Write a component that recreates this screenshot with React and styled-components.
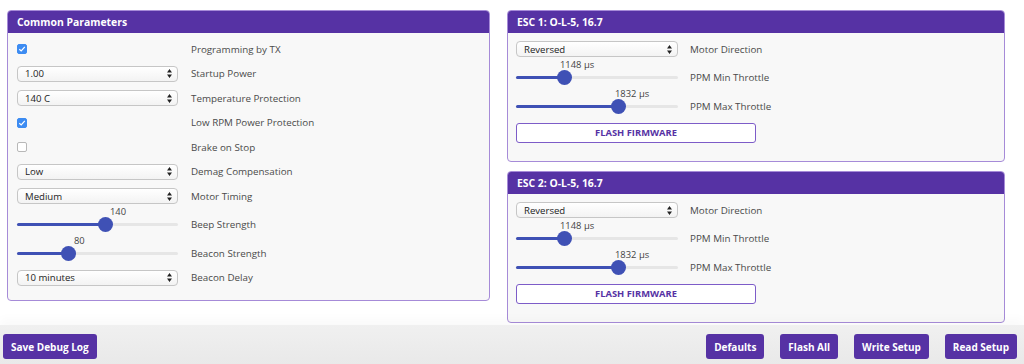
import React from 'react';
import styled, { createGlobalStyle } from 'styled-components';

const Global = createGlobalStyle`
  html, body {
    margin: 0;
    padding: 0;
    background: #ffffff;
    font-family: "Open Sans", "Liberation Sans", sans-serif;
  }
  * { box-sizing: border-box; }
`;

const purple = '#5632a4';

const Page = styled.div`
  width: 1024px;
  height: 364px;
  display: flex;
  flex-direction: column;
  overflow: hidden;
`;

const Content = styled.div`
  flex: 1;
  display: flex;
  align-items: flex-start;
  gap: 17px;
  padding: 10px 19px 0 7px;
`;

const Column = styled.div`
  width: 498px;
  display: flex;
  flex-direction: column;
  gap: 9px;
`;

const Panel = styled.section`
  width: ${p => p.$w}px;
  height: ${p => p.$h}px;
  border: 1px solid #a68bd8;
  border-radius: 4px;
  background: #f8f8f8;
  overflow: hidden;
`;

const Header = styled.h3`
  margin: 0;
  height: 22px;
  line-height: 22px;
  padding-left: 9px;
  background: ${purple};
  color: #fff;
  font-size: 10.4px;
  font-weight: 700;
`;

const Body = styled.div`
  padding: 4px ${p => p.$pad}px 0;
`;

const Row = styled.div`
  display: flex;
  align-items: center;
  height: 24.5px;
  margin-top: ${p => (p.$slider ? 4 : 0)}px;
`;

const Control = styled.div`
  width: ${p => p.$w}px;
  flex: none;
  position: relative;
  display: flex;
  align-items: center;
`;

const Label = styled.span`
  margin-left: ${p => p.$gap}px;
  font-size: 9.8px;
  color: #4a4a4a;
  white-space: nowrap;
`;

const Check = styled.span`
  width: 10px;
  height: 10px;
  border-radius: 2px;
  display: inline-flex;
  align-items: center;
  justify-content: center;
  background: ${p => (p.$on ? '#3d8cf2' : '#fff')};
  border: 1px solid ${p => (p.$on ? '#3d8cf2' : '#b8b8b8')};
`;

const SelectBox = styled.div`
  width: 100%;
  height: 16px;
  border: 1px solid #c6c6c6;
  border-radius: 4px;
  background: linear-gradient(#ffffff, #f3f3f3);
  display: flex;
  align-items: center;
  justify-content: space-between;
  padding: 0 5px 0 7px;
  font-size: 9.6px;
  color: #222;
`;

const Track = styled.div`
  position: relative;
  width: 100%;
  height: 3px;
  border-radius: 2px;
  background: #e6e6e6;
`;

const Fill = styled.div`
  position: absolute;
  left: 0;
  top: 0;
  height: 3px;
  border-radius: 2px;
  background: #3f51b5;
`;

const Thumb = styled.div`
  position: absolute;
  top: -6px;
  width: 15px;
  height: 15px;
  margin-left: -7.5px;
  border-radius: 50%;
  background: #3f51b5;
`;

const Value = styled.span`
  position: absolute;
  top: -17px;
  font-size: 9.4px;
  line-height: 12px;
  color: #444;
  white-space: nowrap;
`;

const FlashButton = styled.button`
  margin-top: 4px;
  width: 240px;
  height: 20px;
  border: 1px solid #7d5cc8;
  border-radius: 3px;
  background: #fff;
  color: ${purple};
  font-family: inherit;
  font-size: 9.4px;
  font-weight: 700;
  padding: 0;
`;

const Toolbar = styled.div`
  height: 39px;
  flex: none;
  display: flex;
  align-items: flex-start;
  padding: 9px 7px 0 3px;
  background: linear-gradient(#f0f0f0, #e9e9e9);
  box-shadow: 0 -6px 10px rgba(0, 0, 0, 0.025);
`;

const Spacer = styled.div`
  flex: 1;
`;

const ToolButton = styled.button`
  height: 25px;
  margin-left: ${p => p.$ml || 0}px;
  padding: 0 8px;
  border: none;
  border-radius: 3px;
  background: ${purple};
  color: #fff;
  font-family: inherit;
  font-size: 10px;
  font-weight: 700;
`;

const Arrows = () => (
  <svg width="5" height="9" viewBox="0 0 5 9">
    <path d="M2.5 0 L5 3.4 L0 3.4 Z M2.5 9 L5 5.6 L0 5.6 Z" fill="#222" />
  </svg>
);

const Tick = () => (
  <svg width="8" height="8" viewBox="0 0 8 8">
    <path d="M1.3 4.2 L3.2 6 L6.8 1.8" stroke="#fff" strokeWidth="1.2" fill="none" />
  </svg>
);

const Select = ({ value }) => (
  <SelectBox>
    <span>{value}</span>
    <Arrows />
  </SelectBox>
);

const Slider = ({ thumb, value, valueLeft }) => (
  <Track>
    <Fill style={{ width: thumb }} />
    <Thumb style={{ left: thumb }} />
    <Value style={{ left: valueLeft }}>{value}</Value>
  </Track>
);

const Field = ({ item, w, gap }) => {
  let control;
  if (item.type === 'check') control = <Check $on={item.on}>{item.on && <Tick />}</Check>;
  else if (item.type === 'select') control = <Select value={item.value} />;
  else control = <Slider thumb={item.thumb} value={item.value} valueLeft={item.valueLeft} />;
  return (
    <Row $slider={item.type === 'slider'}>
      <Control $w={w}>{control}</Control>
      <Label $gap={gap}>{item.label}</Label>
    </Row>
  );
};

const common = [
  { type: 'check', on: true, label: 'Programming by TX' },
  { type: 'select', value: '1.00', label: 'Startup Power' },
  { type: 'select', value: '140 C', label: 'Temperature Protection' },
  { type: 'check', on: true, label: 'Low RPM Power Protection' },
  { type: 'check', on: false, label: 'Brake on Stop' },
  { type: 'select', value: 'Low', label: 'Demag Compensation' },
  { type: 'select', value: 'Medium', label: 'Motor Timing' },
  { type: 'slider', thumb: 88, value: '140', valueLeft: 93, label: 'Beep Strength' },
  { type: 'slider', thumb: 51, value: '80', valueLeft: 57, label: 'Beacon Strength' },
  { type: 'select', value: '10 minutes', label: 'Beacon Delay' },
];

const escFields = [
  { type: 'select', value: 'Reversed', label: 'Motor Direction' },
  { type: 'slider', thumb: 48, value: '1148 µs', valueLeft: 44, label: 'PPM Min Throttle' },
  { type: 'slider', thumb: 102, value: '1832 µs', valueLeft: 99, label: 'PPM Max Throttle' },
];

const EscPanel = ({ title }) => (
  <Panel $w={498} $h={152}>
    <Header>{title}</Header>
    <Body $pad={8}>
      {escFields.map(f => (
        <Field key={f.label} item={f} w={162} gap={12} />
      ))}
      <FlashButton>FLASH FIRMWARE</FlashButton>
    </Body>
  </Panel>
);

export default function App() {
  return (
    <Page>
      <Global />
      <Content>
        <Panel $w={483} $h={291}>
          <Header>Common Parameters</Header>
          <Body $pad={9}>
            {common.map(f => (
              <Field key={f.label} item={f} w={161} gap={13} />
            ))}
          </Body>
        </Panel>
        <Column>
          <EscPanel title="ESC 1: O-L-5, 16.7" />
          <EscPanel title="ESC 2: O-L-5, 16.7" />
        </Column>
      </Content>
      <Toolbar>
        <ToolButton>Save Debug Log</ToolButton>
        <Spacer />
        <ToolButton>Defaults</ToolButton>
        <ToolButton $ml={16}>Flash All</ToolButton>
        <ToolButton $ml={16}>Write Setup</ToolButton>
        <ToolButton $ml={16}>Read Setup</ToolButton>
      </Toolbar>
    </Page>
  );
}
